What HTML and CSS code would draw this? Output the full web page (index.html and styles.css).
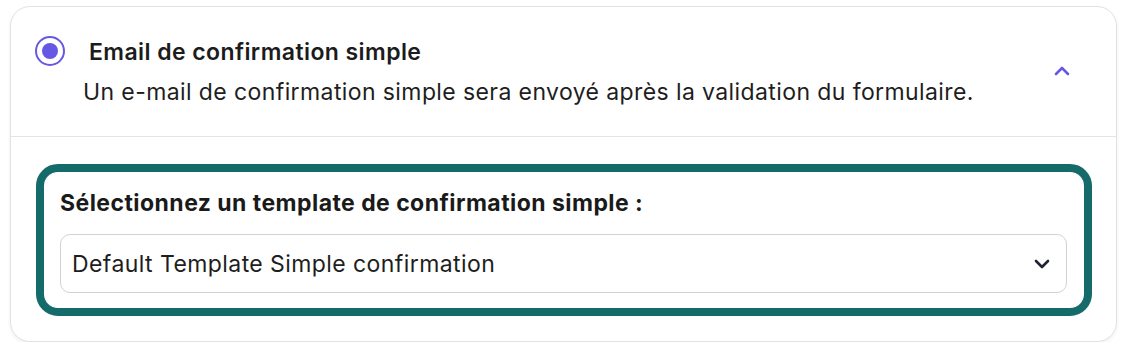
FILE: index.html
```html
<!DOCTYPE html>
<html lang="fr">
<head>
<meta charset="utf-8">
<title>Email de confirmation simple</title>
<link rel="stylesheet" href="styles.css">
</head>
<body>
<div class="card">
  <div class="card-header">
    <span class="radio"><span class="radio-dot"></span></span>
    <div class="header-text">
      <div class="title">Email de confirmation simple</div>
      <div class="desc">Un e-mail de confirmation simple sera envoyé après la validation du formulaire.</div>
    </div>
    <svg class="chev-up" width="16" height="10" viewBox="0 0 16 10"><polyline points="2,8 8,2 14,8" fill="none" stroke="currentColor" stroke-width="2.6" stroke-linecap="round" stroke-linejoin="round"/></svg>
  </div>
  <div class="card-body">
    <div class="panel">
      <div class="label">Sélectionnez un template de confirmation simple :</div>
      <div class="select">
        <span class="select-value">Default Template Simple confirmation</span>
        <svg class="chev-down" width="16" height="10" viewBox="0 0 16 10"><polyline points="2,2 8,8 14,2" fill="none" stroke="currentColor" stroke-width="2.6" stroke-linecap="round" stroke-linejoin="round"/></svg>
      </div>
    </div>
  </div>
</div>
</body>
</html>
```
FILE: styles.css
```css
* { box-sizing: border-box; }
html, body { margin: 0; padding: 0; background: #ffffff; }
body {
  font-family: Inter, "Noto Sans", "Liberation Sans", sans-serif;
  color: #1c1c1c;
  padding: 6px 11px 0 10px;
}
.card {
  width: 1107px;
  height: 336px;
  border: 1.5px solid #e2e2e2;
  border-radius: 20px;
  background: #fff;
  box-shadow: 0 2px 4px rgba(0,0,0,0.06);
  display: flex;
  flex-direction: column;
}
.card-header {
  display: flex;
  align-items: flex-start;
  padding: 31px 46px 0 24px;
  height: 130px;
  border-bottom: 1.5px solid #e4e4e4;
}
.radio {
  flex: none;
  width: 30px;
  height: 30px;
  margin-top: -2px;
  border: 2px solid #6558e2;
  border-radius: 50%;
  display: flex;
  align-items: center;
  justify-content: center;
}
.radio-dot {
  width: 16px;
  height: 16px;
  border-radius: 50%;
  background: #6558e2;
}
.header-text {
  flex: 1;
  margin-left: 18px;
}
.title {
  font-size: 23px;
  line-height: 28px;
  font-weight: 600;
  letter-spacing: 0.42px;
  padding-left: 6px;
  color: #1c1c1c;
}
.desc {
  font-size: 23px;
  line-height: 28px;
  letter-spacing: 0.4px;
  margin-top: 12px;
  color: #1e1e1e;
}
.chev-up {
  flex: none;
  color: #6558e2;
  margin-top: 28px;
}
.card-body {
  padding: 27px 24px 25px 25px;
  flex: 1;
  display: flex;
}
.panel {
  flex: 1;
  border: 8px solid #146b69;
  border-radius: 22px;
  padding: 19px 17px 15px 16px;
}
.label {
  font-size: 23px;
  line-height: 24px;
  font-weight: 700;
  letter-spacing: 0.45px;
  color: #1a1a1a;
}
.select {
  margin-top: 19px;
  height: 59px;
  border: 1.5px solid #d2d2d2;
  border-radius: 10px;
  display: flex;
  align-items: center;
  justify-content: space-between;
  padding: 0 16px 0 11px;
}
.select-value {
  font-size: 23px;
  letter-spacing: 0.42px;
  color: #1e1e1e;
}
.chev-down {
  color: #1f2433;
}
```
